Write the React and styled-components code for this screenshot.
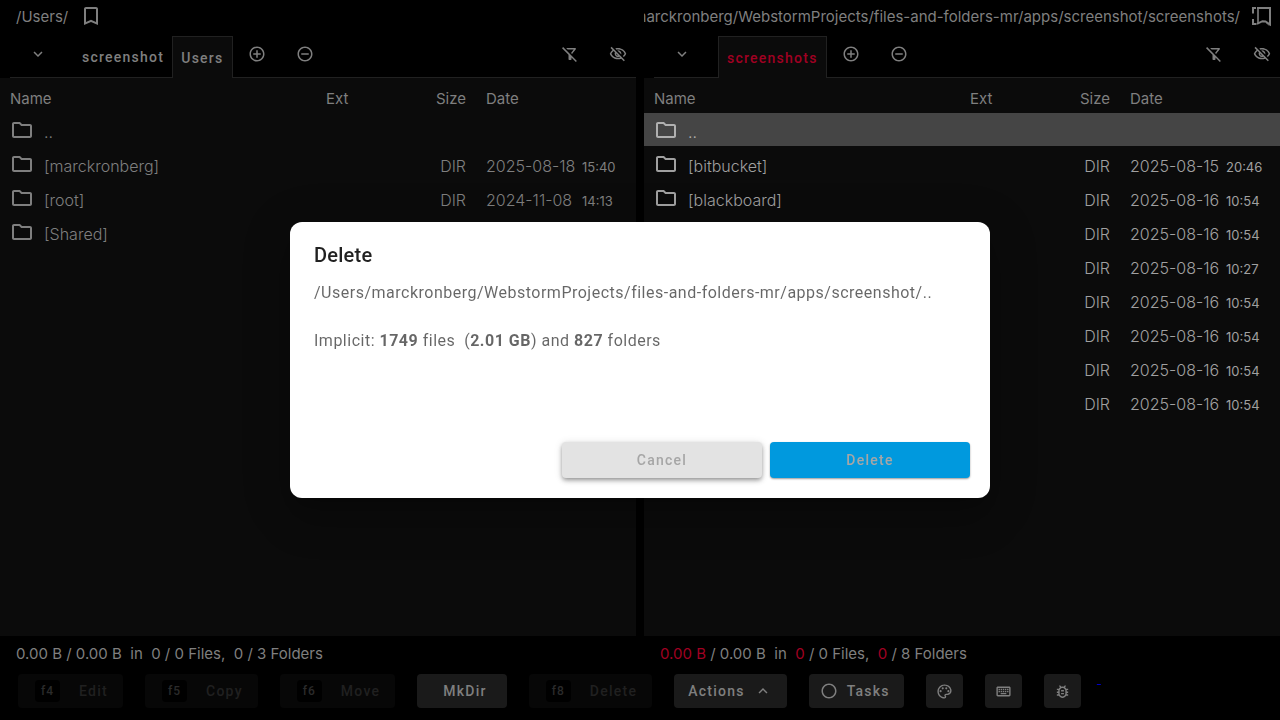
import React from "react";
import styled, { createGlobalStyle } from "styled-components";
import {
  MdBookmarkBorder,
  MdExpandMore,
  MdExpandLess,
  MdOutlineAddCircleOutline,
  MdRemoveCircleOutline,
  MdOutlineFilterAltOff,
  MdOutlineVisibilityOff,
  MdOutlineFolder,
  MdOutlinePalette,
  MdOutlineKeyboard,
  MdOutlineBugReport,
  MdRadioButtonUnchecked,
} from "react-icons/md";

const GlobalStyle = createGlobalStyle`
  * { box-sizing: border-box; }
  body {
    margin: 0;
    background: #000;
    color: #7f7f7f;
    font-family: Inter, sans-serif;
    font-size: 15px;
    font-weight: 400;
  }
  button { font: inherit; color: inherit; border: 0; margin: 0; padding: 0; background: none; }
  svg { display: block; flex: none; }
`;

const Page = styled.div`
  display: flex;
  flex-direction: column;
  min-height: 100vh;
`;

const Panels = styled.main`
  flex: 1;
  display: grid;
  grid-template-columns: minmax(0, 1fr) minmax(0, 1fr);
  gap: 8px;
`;

const Panel = styled.section`
  display: flex;
  flex-direction: column;
  min-width: 0;
`;

const PathBar = styled.header`
  display: flex;
  align-items: center;
  justify-content: ${(p) => (p.$end ? "flex-end" : "flex-start")};
  height: 32px;
  padding: ${(p) => (p.$end ? "0 8px 0 0" : "0 16px")};
  gap: ${(p) => (p.$end ? "8px" : "11px")};
  overflow: hidden;
`;

const PathText = styled.span`
  padding-top: 2px;
  white-space: nowrap;
  line-height: 24px;
`;

const BookmarkButton = styled.button`
  flex: none;
  width: 24px;
  height: 24px;
`;

const TabBar = styled.nav`
  display: flex;
  align-items: flex-end;
  height: 46px;
  margin-left: 10px;
  border-bottom: 1px solid #212121;
`;

const Tab = styled.button`
  height: 42px;
  padding: 0 8px;
  margin-bottom: -1px;
  border: ${(p) => (p.$active ? "1px solid #212121" : "0")};
  border-bottom: 0;
  background: ${(p) => (p.$active ? "#0b0b0b" : "transparent")};
  color: ${(p) => (p.$accent ? "#a00022" : "#7f7f7f")};
  font: 500 14px/20px Roboto, sans-serif;
  letter-spacing: 1.25px;
`;

const IconButton = styled.button`
  display: flex;
  align-items: center;
  justify-content: center;
  width: 36px;
  height: 46px;
`;

const MenuButton = styled(IconButton)`
  width: 56px;
  margin-right: 8px;
`;

const Tools = styled.div`
  flex: 1;
  display: flex;
  gap: 12px;
  padding-left: 6px;
`;

const Spacer = styled.span`
  flex: 1;
`;

const TableArea = styled.div`
  flex: 1;
  background: #0b0b0b;
`;

const Table = styled.table`
  width: 100%;
  table-layout: fixed;
  border-collapse: separate;
  border-spacing: 0;
`;

const Col = styled.col`
  width: ${(p) => p.$w};
`;

const Head = styled.th`
  height: 35px;
  padding: 7px 10px 0;
  text-align: ${(p) => (p.$right ? "right" : "left")};
  font-weight: 400;
  line-height: 24px;
`;

const Cell = styled.td`
  height: 34px;
  padding: 5px 10px 0;
  border-bottom: 1px solid transparent;
  background: ${(p) => (p.$selected ? "#454545" : "transparent")};
  background-clip: padding-box;
  color: ${(p) => (p.$selected ? "#b0b0b0" : p.$bright ? "#a0a0a0" : "#7f7f7f")};
  text-align: ${(p) => (p.$right ? "right" : "left")};
  font-size: 16px;
  font-weight: 300;
  line-height: 24px;
  white-space: nowrap;
`;

const NameBox = styled.span`
  display: flex;
  align-items: flex-start;
  gap: 10px;
  height: 28px;
  line-height: 28px;
`;

const DateText = styled.span`
  display: inline-block;
  width: 96px;
`;

const Time = styled.span`
  font-size: 13px;
  font-weight: 400;
`;

const StatusBar = styled.footer`
  display: grid;
  grid-template-columns: minmax(0, 1fr) minmax(0, 1fr);
  gap: 8px;
  height: 34px;
`;

const Status = styled.span`
  padding-left: 16px;
  line-height: 36px;
  white-space: pre;
`;

const Accent = styled.span`
  color: #a00022;
`;

const ActionBar = styled.div`
  display: flex;
  align-items: center;
  gap: 22px;
  height: 50px;
  padding: 0 18px 8px;
`;

const ActionButton = styled.button`
  display: flex;
  align-items: center;
  justify-content: center;
  height: 34px;
  padding: ${(p) => p.$pad || "0 15px 0 17px"};
  gap: ${(p) => p.$gap || "9px"};
  border-radius: 4px;
  background: ${(p) => (p.disabled ? "#070707" : "#1a1a1a")};
  color: ${(p) => (p.disabled ? "#202020" : "#7f7f7f")};
  font: 500 14px/20px Roboto, sans-serif;
  letter-spacing: 1.25px;
`;

const Key = styled.kbd`
  padding: 0 6px;
  border-radius: 4px;
  background: #000;
  font: 500 12px/22px Roboto, sans-serif;
  letter-spacing: 1px;
  color: #2b2b2b;
`;

const TinyLink = styled.a`
  align-self: flex-start;
  margin-left: -6px;
  color: #0000c8;
  font: 400 16px/16px "Liberation Serif", serif;
`;

const Overlay = styled.div`
  position: fixed;
  inset: 0;
  display: flex;
  align-items: center;
  justify-content: center;
`;

const Dialog = styled.div`
  display: flex;
  flex-direction: column;
  width: 700px;
  max-width: 80vw;
  min-height: 276px;
  padding: 20px 20px 20px 24px;
  border-radius: 12px;
  background: #fff;
  color: rgba(0, 0, 0, 0.6);
  box-shadow: 0 11px 15px -7px rgba(0, 0, 0, 0.2), 0 24px 38px 3px rgba(0, 0, 0, 0.14), 0 9px 46px 8px rgba(0, 0, 0, 0.12);
  font: 400 16px/24px Roboto, sans-serif;
  letter-spacing: 0.5px;
`;

const DialogTitle = styled.h2`
  margin: 0 0 13px;
  color: rgba(0, 0, 0, 0.87);
  font: 500 20px/26px Roboto, sans-serif;
  letter-spacing: 0.25px;
`;

const DialogText = styled.p`
  margin: 0 0 24px;
  line-height: 24px;
  white-space: pre-wrap;
`;

const DialogActions = styled.div`
  display: flex;
  justify-content: flex-end;
  gap: 8px;
  margin-top: auto;
`;

const DialogButton = styled.button`
  width: 200px;
  height: 36px;
  border-radius: 4px;
  background: ${(p) => (p.$primary ? "#0099de" : "#e3e3e3")};
  color: #a6a6a6;
  box-shadow: ${(p) =>
    p.$primary
      ? "0 1px 2px rgba(0, 0, 0, 0.4)"
      : "0 2px 4px -1px rgba(0, 0, 0, 0.3), 0 3px 5px rgba(0, 0, 0, 0.16), 0 1px 8px rgba(0, 0, 0, 0.12)"};
  font: 500 14px/20px Roboto, sans-serif;
  letter-spacing: 1.25px;
`;

const leftRows = [
  { name: ".." },
  { name: "[marckronberg]", date: "2025-08-18", time: "15:40" },
  { name: "[root]", date: "2024-11-08", time: "14:13" },
  { name: "[Shared]" },
];

const rightRows = [
  { name: "..", selected: true },
  { name: "[bitbucket]", date: "2025-08-15", time: "20:46" },
  { name: "[blackboard]", date: "2025-08-16", time: "10:54" },
  { name: "", date: "2025-08-16", time: "10:54" },
  { name: "", date: "2025-08-16", time: "10:27" },
  { name: "", date: "2025-08-16", time: "10:54" },
  { name: "", date: "2025-08-16", time: "10:54" },
  { name: "", date: "2025-08-16", time: "10:54" },
  { name: "", date: "2025-08-16", time: "10:54" },
];

function OverlaidBookmarks() {
  return (
    <svg width="24" height="24" viewBox="0 0 24 24" fill="none" stroke="currentColor">
      <path d="M8 4H5v5.500M5 15v5h3.500" strokeWidth="2" />
      <path d="M10 3v16" strokeWidth="1.600" />
      <path d="M9 4h13v16.500l-4.500-3-3-.3-5.500 2.600" strokeWidth="2" />
      <path d="M18 18.500l2.500 2.300H23" strokeWidth="1" />
    </svg>
  );
}

function FileTable({ rows, bright }) {
  return (
    <TableArea>
      <Table>
        <colgroup>
          <Col $w="auto" />
          <Col $w="80px" />
          <Col $w="80px" />
          <Col $w="160px" />
        </colgroup>
        <thead>
          <tr>
            <Head>Name</Head>
            <Head>Ext</Head>
            <Head $right>Size</Head>
            <Head>Date</Head>
          </tr>
        </thead>
        <tbody>
          {rows.map((r, i) => {
            const look = { $selected: r.selected, $bright: bright };
            return (
              <tr key={i}>
                <Cell {...look}>
                  <NameBox>
                    <MdOutlineFolder size={24} />
                    {r.name}
                  </NameBox>
                </Cell>
                <Cell {...look} />
                <Cell {...look} $right>{r.date && "DIR"}</Cell>
                <Cell {...look}>
                  {r.date && <DateText>{r.date}</DateText>}
                  {r.time && <Time>{r.time}</Time>}
                </Cell>
              </tr>
            );
          })}
        </tbody>
      </Table>
    </TableArea>
  );
}

function TabTools() {
  return (
    <Tools>
      <IconButton aria-label="Add tab"><MdOutlineAddCircleOutline size={18} /></IconButton>
      <IconButton aria-label="Remove tab"><MdRemoveCircleOutline size={18} /></IconButton>
      <Spacer />
      <IconButton aria-label="Clear filter"><MdOutlineFilterAltOff size={18} /></IconButton>
      <IconButton aria-label="Hidden files"><MdOutlineVisibilityOff size={18} /></IconButton>
    </Tools>
  );
}

export default function App() {
  return (
    <Page>
      <GlobalStyle />
      <Panels>
        <Panel>
          <PathBar>
            <PathText>/Users/</PathText>
            <BookmarkButton aria-label="Bookmark"><MdBookmarkBorder size={24} /></BookmarkButton>
          </PathBar>
          <TabBar>
            <MenuButton aria-label="Tabs"><MdExpandMore size={18} /></MenuButton>
            <Tab>screenshot</Tab>
            <Tab $active>Users</Tab>
            <TabTools />
          </TabBar>
          <FileTable rows={leftRows} />
        </Panel>
        <Panel>
          <PathBar $end>
            <PathText>/Users/marckronberg/WebstormProjects/files-and-folders-mr/apps/screenshot/screenshots/</PathText>
            <BookmarkButton aria-label="Bookmark"><OverlaidBookmarks /></BookmarkButton>
          </PathBar>
          <TabBar>
            <MenuButton aria-label="Tabs"><MdExpandMore size={18} /></MenuButton>
            <Tab $active $accent>screenshots</Tab>
            <TabTools />
          </TabBar>
          <FileTable rows={rightRows} bright />
        </Panel>
      </Panels>
      <StatusBar>
        <Status>{"0.00 B / 0.00 B  in  0 / 0 Files,  0 / 3 Folders"}</Status>
        <Status>
          <Accent>0.00 B</Accent>{" / 0.00 B  in  "}<Accent>0</Accent>{" / 0 Files,  "}<Accent>0</Accent>{" / 8 Folders"}
        </Status>
      </StatusBar>
      <ActionBar>
        <ActionButton disabled $gap="19px"><Key>f4</Key>Edit</ActionButton>
        <ActionButton disabled $gap="19px"><Key>f5</Key>Copy</ActionButton>
        <ActionButton disabled $gap="19px"><Key>f6</Key>Move</ActionButton>
        <ActionButton $pad="0 20px 0 26px">MkDir</ActionButton>
        <ActionButton disabled $gap="19px"><Key>f8</Key>Delete</ActionButton>
        <ActionButton $pad="0 15px 0 14px">Actions<MdExpandLess size={18} /></ActionButton>
        <ActionButton $pad="0 14px 0 11px"><MdRadioButtonUnchecked size={18} />Tasks</ActionButton>
        <ActionButton $pad="0 10px" aria-label="Theme"><MdOutlinePalette size={17} /></ActionButton>
        <ActionButton $pad="0 10px" aria-label="Shortcuts"><MdOutlineKeyboard size={17} /></ActionButton>
        <ActionButton $pad="0 10px" aria-label="Report a bug"><MdOutlineBugReport size={17} /></ActionButton>
        <TinyLink href="#">&nbsp;</TinyLink>
      </ActionBar>
      <Overlay>
        <Dialog role="dialog" aria-labelledby="dialog-title">
          <DialogTitle id="dialog-title">Delete</DialogTitle>
          <DialogText>/Users/marckronberg/WebstormProjects/files-and-folders-mr/apps/screenshot/..</DialogText>
          <DialogText>
            Implicit: <b>1749</b>{" files  ("}<b>2.01 GB</b>) and <b>827</b> folders
          </DialogText>
          <DialogActions>
            <DialogButton>Cancel</DialogButton>
            <DialogButton $primary>Delete</DialogButton>
          </DialogActions>
        </Dialog>
      </Overlay>
    </Page>
  );
}
